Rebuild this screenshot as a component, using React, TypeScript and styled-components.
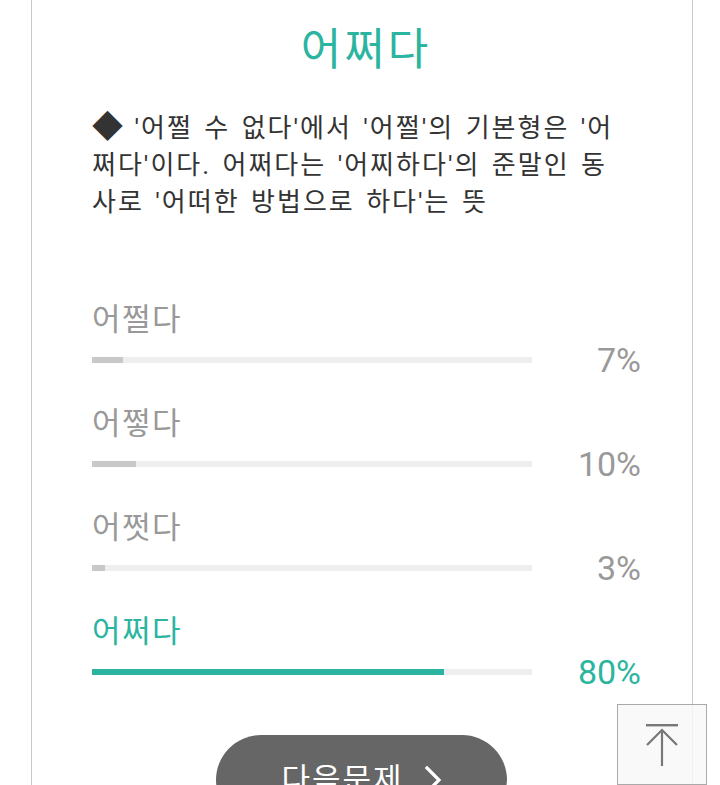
import React from "react";
import styled, { createGlobalStyle } from "styled-components";

const GlobalStyle = createGlobalStyle`
  html, body {
    margin: 0;
    padding: 0;
    background: #ffffff;
  }
  body {
    font-family: Roboto, "Noto Sans CJK KR", sans-serif;
    -webkit-font-smoothing: antialiased;
  }
`;

const Page = styled.div`
  padding: 0 27px 0 31px;
`;

const Card = styled.section`
  box-sizing: border-box;
  border-left: 1px solid #c9c9c9;
  border-right: 1px solid #c9c9c9;
  padding: 22px 52px 60px 60px;
  display: flex;
  flex-direction: column;
`;

const Title = styled.h1`
  margin: 0;
  font-family: Roboto, "Noto Sans CJK KR", sans-serif;
  font-weight: 400;
  font-size: 44px;
  line-height: 56px;
  letter-spacing: 3px;
  color: #2bb5a0;
  text-align: center;
`;

const Explanation = styled.p`
  margin: 32px 0 0;
  font-size: 26px;
  line-height: 37px;
  letter-spacing: 2px;
  word-spacing: 3px;
  color: #333333;
  white-space: nowrap;
`;

const Bullet = styled.span`
  font-size: 31px;
  line-height: 0;
  letter-spacing: 0;
`;

const Options = styled.div`
  margin-top: 79px;
  display: flex;
  flex-direction: column;
  gap: 24px;
`;

const Option = styled.div`
  display: flex;
  flex-direction: column;
`;

const Label = styled.div<{ $correct?: boolean }>`
  font-size: 31px;
  line-height: 40px;
  letter-spacing: 1.5px;
  color: ${(p) => (p.$correct ? "#2bb5a0" : "#999999")};
`;

const StatRow = styled.div`
  display: flex;
  align-items: center;
`;

const Track = styled.div`
  width: 440px;
  height: 6px;
  background: #eeeeee;
  flex: none;
`;

const Fill = styled.div<{ $correct?: boolean }>`
  height: 100%;
  background: ${(p) => (p.$correct ? "#2bb5a0" : "#c8c8c8")};
`;

const Percent = styled.div<{ $correct?: boolean }>`
  flex: 1;
  text-align: right;
  font-size: 34px;
  line-height: 40px;
  margin-right: -1px;
  color: ${(p) => (p.$correct ? "#2bb5a0" : "#999999")};
`;

const ButtonRow = styled.div`
  margin-top: 43px;
  display: flex;
  justify-content: center;
  padding-right: 9px;
`;

const NextButton = styled.button`
  width: 291px;
  height: 90px;
  border: none;
  border-radius: 45px;
  background: #666666;
  color: #ffffff;
  font-family: Roboto, "Noto Sans CJK KR", sans-serif;
  font-size: 31px;
  line-height: 90px;
  letter-spacing: 2px;
  display: flex;
  align-items: center;
  justify-content: center;
  gap: 20px;
  padding: 0;
  cursor: pointer;
`;

const TopButton = styled.button`
  position: fixed;
  right: 13px;
  bottom: 0;
  width: 90px;
  height: 81px;
  box-sizing: border-box;
  border: 1px solid #aaaaaa;
  background: rgba(248, 248, 248, 0.85);
  padding: 0;
  display: flex;
  align-items: center;
  justify-content: center;
  cursor: pointer;
`;

type Choice = { label: string; pct: number; correct?: boolean };

const choices: Choice[] = [
  { label: "어쩔다", pct: 7 },
  { label: "어쩧다", pct: 10 },
  { label: "어쩟다", pct: 3 },
  { label: "어쩌다", pct: 80, correct: true },
];

export default function App() {
  return (
    <>
      <GlobalStyle />
      <Page>
        <Card>
          <Title>어쩌다</Title>
          <Explanation>
            <Bullet>◆</Bullet> '어쩔 수 없다'에서 '어쩔'의 기본형은 '어
            <br />
            쩌다'이다. 어쩌다는 '어찌하다'의 준말인 동
            <br />
            사로 '어떠한 방법으로 하다'는 뜻
          </Explanation>
          <Options>
            {choices.map((c) => (
              <Option key={c.label}>
                <Label $correct={c.correct}>{c.label}</Label>
                <StatRow>
                  <Track>
                    <Fill $correct={c.correct} style={{ width: `${c.pct}%` }} />
                  </Track>
                  <Percent $correct={c.correct}>{c.pct}%</Percent>
                </StatRow>
              </Option>
            ))}
          </Options>
          <ButtonRow>
            <NextButton>
              <span>다음문제</span>
              <svg width="18" height="30" viewBox="0 0 18 30" fill="none">
                <path d="M3 3 L15 15 L3 27" stroke="#ffffff" strokeWidth="3.2" strokeLinecap="square" />
              </svg>
            </NextButton>
          </ButtonRow>
        </Card>
      </Page>
      <TopButton aria-label="맨 위로">
        <svg width="34" height="42" viewBox="0 0 34 42" fill="none">
          <path d="M1 1.2 H33" stroke="#777777" strokeWidth="2.4" />
          <path d="M17 6 V42" stroke="#777777" strokeWidth="2.2" />
          <path d="M2 21 L17 6 L32 21" stroke="#777777" strokeWidth="2.2" />
        </svg>
      </TopButton>
    </>
  );
}
